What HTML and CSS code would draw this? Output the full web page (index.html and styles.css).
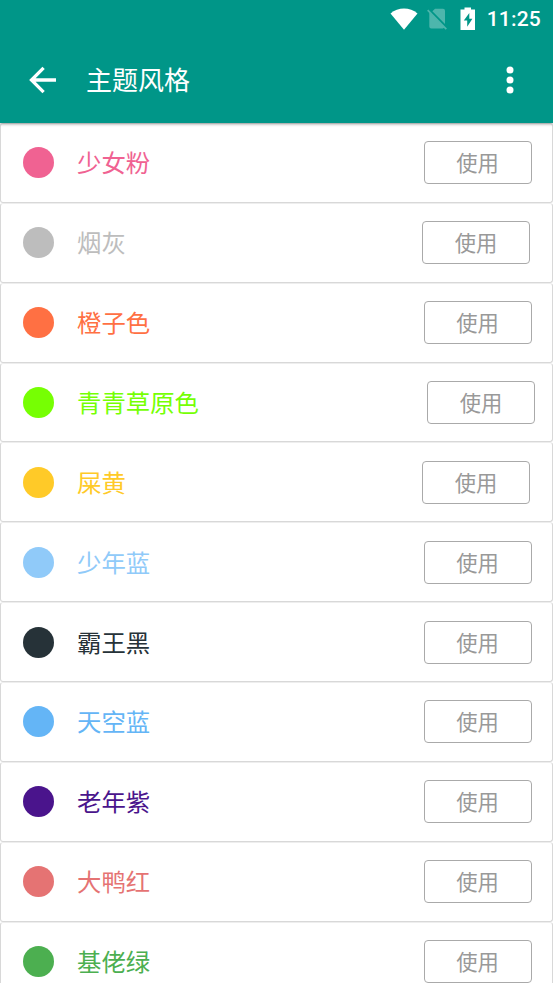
FILE: index.html
```html
<!DOCTYPE html>
<html lang="zh-CN">
<head>
    <meta charset="UTF-8">
    <meta name="viewport" content="width=device-width, initial-scale=1.0">
    <title>主题风格</title>
    <link rel="stylesheet" href="styles.css">
</head>
<body>
    <header class="header">
        <div class="status-bar">
            <svg class="icon-wifi" width="28" height="22" viewBox="0 0 28 22">
                <path d="M0.5 5.5C8-1.2 20-1.2 27.5 5.5L14 21.8z" fill="#fff"/>
            </svg>
            <svg class="icon-sim" width="20" height="22" viewBox="0 0 20 22">
                <path d="M8 0.7H16q2 0 2 2V16L5.4 3.3zM2.3 4.2L17.4 19.6q-.6.8-1.6.8H4.3q-2 0-2-2z" fill="#4db6ac"/>
                <path d="M0.7 2.2L19.3 21.2" stroke="#4db6ac" stroke-width="1.7"/>
            </svg>
            <svg class="icon-battery" width="16" height="24" viewBox="0 0 16 24">
                <path d="M4.5 0.5h6.5v2H15V23H0.5V2.5h4z" fill="#fff"/>
                <path d="M9.3 6L3.8 13.6h3.4v6.2l5.2-8H9.3z" fill="#009688"/>
            </svg>
            <span class="clock">11:25</span>
        </div>
        <div class="toolbar">
            <svg class="icon-back" width="28" height="28" viewBox="0 0 28 28">
                <path d="M27 14H3M14.6 1.9L2.5 14l12.1 12.1" fill="none" stroke="#fff" stroke-width="3.3"/>
            </svg>
            <h1>主题风格</h1>
            <svg class="icon-more" width="8" height="28" viewBox="0 0 8 28">
                <g fill="#fff">
                    <circle cx="4" cy="4" r="3.5"/>
                    <circle cx="4" cy="14" r="3.5"/>
                    <circle cx="4" cy="24" r="3.5"/>
                </g>
            </svg>
        </div>
    </header>

    <ul class="theme-list">
        <li class="theme-item pink">
            <span class="dot"></span><span class="name">少女粉</span><button class="use-btn">使用</button>
        </li>
        <li class="theme-item gray short">
            <span class="dot"></span><span class="name">烟灰</span><button class="use-btn">使用</button>
        </li>
        <li class="theme-item orange">
            <span class="dot"></span><span class="name">橙子色</span><button class="use-btn">使用</button>
        </li>
        <li class="theme-item grass long">
            <span class="dot"></span><span class="name">青青草原色</span><button class="use-btn">使用</button>
        </li>
        <li class="theme-item yellow short">
            <span class="dot"></span><span class="name">屎黄</span><button class="use-btn">使用</button>
        </li>
        <li class="theme-item light-blue">
            <span class="dot"></span><span class="name">少年蓝</span><button class="use-btn">使用</button>
        </li>
        <li class="theme-item black">
            <span class="dot"></span><span class="name">霸王黑</span><button class="use-btn">使用</button>
        </li>
        <li class="theme-item sky">
            <span class="dot"></span><span class="name">天空蓝</span><button class="use-btn">使用</button>
        </li>
        <li class="theme-item purple">
            <span class="dot"></span><span class="name">老年紫</span><button class="use-btn">使用</button>
        </li>
        <li class="theme-item red">
            <span class="dot"></span><span class="name">大鸭红</span><button class="use-btn">使用</button>
        </li>
        <li class="theme-item green">
            <span class="dot"></span><span class="name">基佬绿</span><button class="use-btn">使用</button>
        </li>
    </ul>
</body>
</html>
```
FILE: styles.css
```css
* {
    box-sizing: border-box;
    margin: 0;
    padding: 0;
}

body {
    height: 100vh;
    display: flex;
    flex-direction: column;
    overflow: hidden;
    background: #fff;
    font-family: Roboto, "Noto Sans CJK SC", sans-serif;
}

.header {
    position: relative;
    z-index: 1;
    flex: none;
    height: 123px;
    background: #009688;
    color: #fff;
    box-shadow: 0 1px 3px rgba(0, 0, 0, 0.4);
}

.status-bar {
    display: flex;
    align-items: center;
    justify-content: flex-end;
    height: 37px;
    padding-right: 12px;
}

.icon-sim {
    margin-left: 9px;
}

.icon-battery {
    margin-left: 13px;
}

.clock {
    margin-left: 11px;
    padding-top: 1px;
    font-size: 21px;
    font-weight: 500;
    letter-spacing: 0.2px;
}

.toolbar {
    display: flex;
    align-items: center;
    height: 86px;
    padding: 0 39px 0 29px;
}

.toolbar h1 {
    flex: 1;
    margin-left: 29px;
    padding-bottom: 3px;
    font-size: 26px;
    font-weight: 400;
}

.theme-list {
    flex: none;
    list-style: none;
}

.theme-item {
    display: flex;
    align-items: center;
    height: 79.86px;
    padding: 0 20.5px 0 22px;
    border: 1px solid #d8d8d8;
    border-top-color: #eee;
    border-radius: 3px;
}

.dot {
    width: 31px;
    height: 31px;
    border-radius: 50%;
    background: currentColor;
}

.name {
    flex: 1;
    margin-left: 23px;
    padding-bottom: 2px;
    font-size: 24.4px;
}

.use-btn {
    width: 108px;
    height: 43px;
    padding-bottom: 2px;
    border: 1px solid #aaa;
    border-radius: 4px;
    background: #fff;
    color: #999;
    font-family: inherit;
    font-size: 21.3px;
}

.short {
    padding-right: 22px;
}

.long {
    padding-right: 17px;
}

.pink { color: #f06292; }
.gray { color: #bdbdbd; }
.orange { color: #ff7043; }
.grass { color: #76ff03; }
.yellow { color: #ffca28; }
.light-blue { color: #90caf9; }
.black { color: #263238; }
.sky { color: #64b5f6; }
.purple { color: #4a148c; }
.red { color: #e57373; }
.green { color: #4caf50; }
```
